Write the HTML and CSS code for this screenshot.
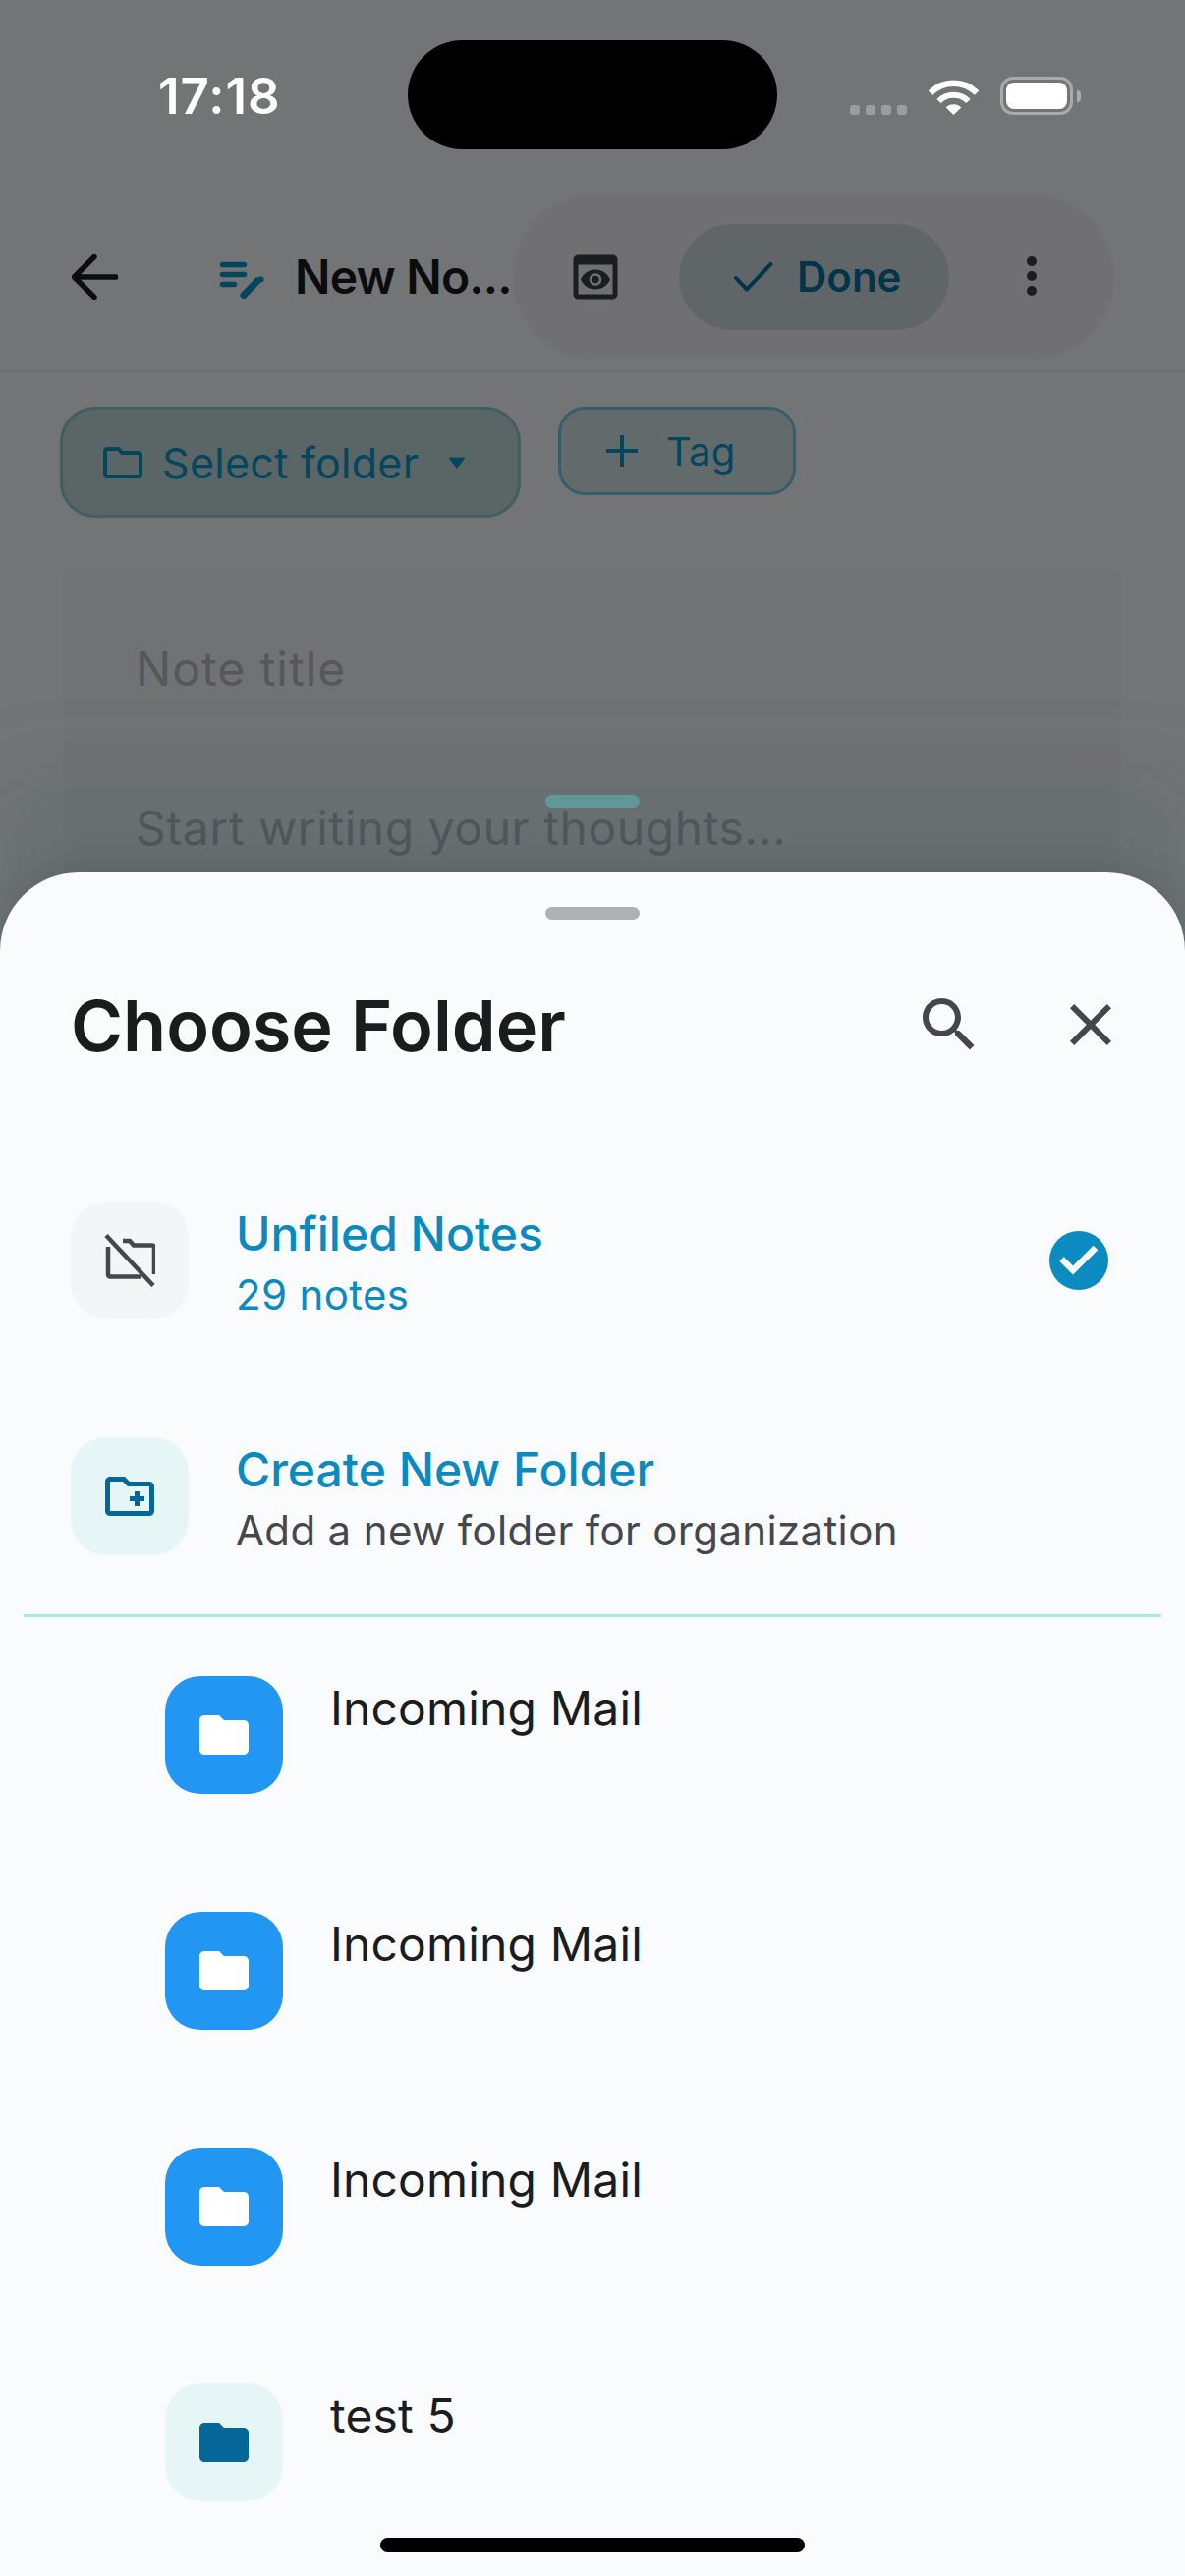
FILE: index.html
```html
<!doctype html>
<html lang="en">
  <head>
    <meta charset="utf-8">
    <title>Choose Folder</title>
    <link rel="stylesheet" href="styles.css">
  </head>

  <body>
    <div class="screen">
      <div class="status">
        <div class="time">17:18</div>
        <div class="island"></div>
        <div class="status-icons">
          <div class="signal"><i></i><i></i><i></i><i></i></div>
          <svg class="wifi" viewBox="0 0 51 37">
            <path d="M1.9 14.6A33 33 0 0 1 49.1 14.6" fill="none" stroke="#fff" stroke-width="6.5"/>
            <path d="M10.5 23A21 21 0 0 1 40.5 23" fill="none" stroke="#fff" stroke-width="6"/>
            <path d="M25.5 37L17.7 29.4A11 11 0 0 1 33.3 29.4Z" fill="#fff"/>
          </svg>
          <div class="battery"><span></span></div>
          <div class="battery-cap"></div>
        </div>
      </div>

      <!-- the note editor behind the sheet -->
      <div class="appbar">
        <svg class="back" viewBox="0 0 47 46">
          <path d="M45 23H3M23 2.500L2.500 23 23 43.500" fill="none" stroke="#1a1c20" stroke-width="5.500" stroke-linecap="round" stroke-linejoin="round"/>
        </svg>
        <svg class="edit-icon" viewBox="0 0 46 38">
          <path d="M3.500 3.500H25.500M3.500 13.500H25.500M3.500 23.500H15.500" fill="none" stroke="#0a98cc" stroke-width="5.500" stroke-linecap="round"/>
          <path d="M25 34.500L39 20" fill="none" stroke="#0a98cc" stroke-width="7" stroke-linecap="round"/>
          <circle cx="42.500" cy="18.500" r="3" fill="#0a98cc"/>
        </svg>
        <div class="note-name">New No...</div>
        <div class="actions">
          <svg class="preview" viewBox="0 0 24 24">
            <path d="M19 3H5c-1.110 0-2 .9-2 2v14c0 1.100.89 2 2 2h14c1.100 0 2-.9 2-2V5c0-1.100-.89-2-2-2zm0 16H5V7h14v12zm-5.500-6c0 .83-.67 1.500-1.500 1.500s-1.500-.67-1.500-1.500.67-1.500 1.500-1.500 1.500.67 1.500 1.500zM12 9c-2.730 0-5.060 1.660-6 4 .94 2.340 3.270 4 6 4s5.060-1.660 6-4c-.94-2.340-3.270-4-6-4zm0 6.500c-1.380 0-2.500-1.120-2.500-2.500s1.120-2.500 2.500-2.500 2.500 1.120 2.500 2.500-1.120 2.500-2.500 2.500z" fill="#3e4148"/>
          </svg>
          <div class="done">
            <svg class="done-check" viewBox="0 0 40 30">
              <path d="M2 16L13 27.500 37.500 2" fill="none" stroke="#0a72a0" stroke-width="4" stroke-linecap="round" stroke-linejoin="round"/>
            </svg>
            <span>Done</span>
          </div>
          <svg class="more" viewBox="0 0 12 44">
            <circle cx="6" cy="6" r="5" fill="#3e4148"/>
            <circle cx="6" cy="21" r="5" fill="#3e4148"/>
            <circle cx="6" cy="36" r="5" fill="#3e4148"/>
          </svg>
        </div>
      </div>

      <div class="chips">
        <div class="chip-folder">
          <svg class="chip-folder-icon" viewBox="0 0 24 24">
            <path d="M9.170 6l2 2H20v10H4V6h5.170M10 4H4c-1.100 0-1.990.9-1.990 2L2 18c0 1.100.9 2 2 2h16c1.100 0 2-.9 2-2V8c0-1.100-.9-2-2-2h-8l-2-2z" fill="#0a98cc"/>
          </svg>
          <span>Select folder</span>
          <svg class="caret" viewBox="0 0 18 12">
            <path d="M2 1.500H16L9 10.500Z" fill="#0a98cc" stroke="#0a98cc" stroke-width="2" stroke-linejoin="round"/>
          </svg>
        </div>
        <div class="chip-tag">
          <svg class="plus" viewBox="0 0 32 32">
            <path d="M16 0V32M0 16H32" stroke="#0a98cc" stroke-width="4"/>
          </svg>
          <span>Tag</span>
        </div>
      </div>

      <div class="note-card">
        <div class="note-title">Note title</div>
        <div class="note-body">Start writing your thoughts...</div>
      </div>

      <div class="scrim"></div>
      <div class="back-sheet"></div>
      <div class="back-handle"></div>

      <div class="sheet">
        <div class="handle"></div>
        <div class="sheet-head">
          <h1>Choose Folder</h1>
          <svg class="head-icon" viewBox="0 0 24 24">
            <path d="M15.500 14h-.79l-.28-.27C15.410 12.590 16 11.110 16 9.500 16 5.910 13.090 3 9.500 3S3 5.910 3 9.500 5.910 16 9.500 16c1.610 0 3.090-.59 4.230-1.570l.27.28v.79l5 4.990L20.490 19l-4.990-5zm-6 0C7.010 14 5 11.990 5 9.500S7.010 5 9.500 5 14 7.010 14 9.500 11.990 14 9.500 14z" fill="#43464c"/>
          </svg>
          <svg class="head-icon" viewBox="0 0 24 24">
            <path d="M19 6.410 17.590 5 12 10.590 6.410 5 5 6.410 10.590 12 5 17.590 6.410 19 12 13.410 17.590 19 19 17.590 13.410 12z" fill="#43464c"/>
          </svg>
        </div>

        <div class="choices">
          <div class="row row-top">
            <div class="tile tile-grey">
              <svg class="icon-off" viewBox="0 0 52 54">
                <path d="M2 1.500L50 52.500" fill="none" stroke="#45474d" stroke-width="4.500"/>
                <path d="M4 13V41.500A2 2 0 0 0 6 43.500H38" fill="none" stroke="#45474d" stroke-width="4.500"/>
                <path d="M19 7H26L30 11.500H49A2 2 0 0 1 51 13.500V41" fill="none" stroke="#45474d" stroke-width="4.500"/>
              </svg>
            </div>
            <div class="text">
              <div class="row-title accent">Unfiled Notes</div>
              <div class="row-sub accent">29 notes</div>
            </div>
            <svg class="selected" viewBox="0 0 60 60">
              <circle cx="30" cy="30" r="30" fill="#0b8bc0"/>
              <path d="M12.500 28.500L24 40 47 17" fill="none" stroke="#fff" stroke-width="6.500"/>
            </svg>
          </div>

          <div class="row row-top">
            <div class="tile tile-teal">
              <svg class="icon-60" viewBox="0 0 24 24">
                <path d="M20 6h-8l-2-2H4c-1.110 0-1.990.89-1.990 2L2 18c0 1.110.89 2 2 2h16c1.110 0 2-.89 2-2V8c0-1.110-.89-2-2-2zm0 12H4V6h5.170l2 2H20v10zm-8-4h2v2h2v-2h2v-2h-2v-2h-2v2h-2z" fill="#056797"/>
              </svg>
            </div>
            <div class="text">
              <div class="row-title accent">Create New Folder</div>
              <div class="row-sub">Add a new folder for organization</div>
            </div>
          </div>
        </div>

        <div class="sheet-rule"></div>

        <div class="folders">
          <div class="row row-folder">
            <div class="tile tile-blue">
              <svg class="icon-60" viewBox="0 0 24 24">
                <path d="M10 4H4c-1.100 0-1.990.9-1.990 2L2 18c0 1.100.9 2 2 2h16c1.100 0 2-.9 2-2V8c0-1.100-.9-2-2-2h-8l-2-2z" fill="#fff"/>
              </svg>
            </div>
            <div class="row-title">Incoming Mail</div>
          </div>
          <div class="row row-folder">
            <div class="tile tile-blue">
              <svg class="icon-60" viewBox="0 0 24 24">
                <path d="M10 4H4c-1.100 0-1.990.9-1.990 2L2 18c0 1.100.9 2 2 2h16c1.100 0 2-.9 2-2V8c0-1.100-.9-2-2-2h-8l-2-2z" fill="#fff"/>
              </svg>
            </div>
            <div class="row-title">Incoming Mail</div>
          </div>
          <div class="row row-folder">
            <div class="tile tile-blue">
              <svg class="icon-60" viewBox="0 0 24 24">
                <path d="M10 4H4c-1.100 0-1.990.9-1.990 2L2 18c0 1.100.9 2 2 2h16c1.100 0 2-.9 2-2V8c0-1.100-.9-2-2-2h-8l-2-2z" fill="#fff"/>
              </svg>
            </div>
            <div class="row-title">Incoming Mail</div>
          </div>
          <div class="row row-folder">
            <div class="tile tile-teal">
              <svg class="icon-60" viewBox="0 0 24 24">
                <path d="M10 4H4c-1.100 0-1.990.9-1.990 2L2 18c0 1.100.9 2 2 2h16c1.100 0 2-.9 2-2V8c0-1.100-.9-2-2-2h-8l-2-2z" fill="#056797"/>
              </svg>
            </div>
            <div class="row-title">test 5</div>
          </div>
        </div>
      </div>

      <div class="home-bar"></div>
    </div>
  </body>
</html>
```

FILE: styles.css
```css
body {
    margin: 0;
    font-family: Inter, "Noto Sans", sans-serif;
}

svg {
    display: block;
    flex: none;
}

.screen {
    position: relative;
    width: 1206px;
    height: 2622px;
    overflow: hidden;
    background: #fafcfe;
}

/* status bar sits above the scrim */
.status {
    position: relative;
    z-index: 3;
    display: grid;
    grid-template-columns: 415px 376px 1fr;
    height: 198px;
}

.time {
    margin-top: 68px;
    padding-left: 161px;
    font-size: 51px;
    font-weight: 600;
    letter-spacing: 1px;
    line-height: 60px;
    color: #fff;
}

.island {
    margin-top: 41px;
    height: 111px;
    border-radius: 56px;
    background: #000;
}

.status-icons {
    display: flex;
    align-items: flex-end;
    height: 117px;
    padding-left: 74px;
}

.signal {
    display: flex;
    gap: 6px;
}

.signal i {
    width: 10px;
    height: 10px;
    border-radius: 3px;
    background: #9b9c9d;
}

.wifi {
    width: 51px;
    height: 37px;
    margin-left: 22px;
}

.battery {
    box-sizing: border-box;
    width: 74px;
    height: 39px;
    margin-left: 22px;
    padding: 3px;
    border: 3px solid #a9aaab;
    border-radius: 13px;
}

.battery span {
    display: block;
    height: 100%;
    border-radius: 8px;
    background: #fff;
}

.battery-cap {
    width: 4px;
    height: 12px;
    margin: 0 0 13px 4px;
    border-radius: 0 4px 4px 0;
    background: #a9aaab;
}

.appbar {
    display: flex;
    align-items: center;
    height: 167px;
    padding: 0 0 12px 73px;
    border-bottom: 2px solid #e0f4f2;
}

.back {
    width: 47px;
    height: 46px;
}

.edit-icon {
    width: 46px;
    height: 38px;
    margin-left: 103px;
    margin-top: 6px;
}

.note-name {
    width: 222px;
    margin-left: 31px;
    font-size: 48px;
    font-weight: 600;
    letter-spacing: -0.8px;
    color: #1a1c20;
    white-space: nowrap;
}

.actions {
    display: flex;
    align-items: center;
    width: 612px;
    height: 167px;
    padding-left: 54px;
    box-sizing: border-box;
    border-radius: 84px;
    background: #f4f5f8;
}

.preview {
    width: 60px;
    height: 60px;
}

.done {
    display: flex;
    align-items: center;
    gap: 24px;
    box-sizing: border-box;
    width: 275px;
    height: 108px;
    margin-left: 55px;
    padding-left: 56px;
    border-radius: 54px;
    background: #d2dfe3;
    font-size: 42px;
    font-weight: 600;
    color: #0a72a0;
}

.done-check {
    width: 40px;
    height: 30px;
}

.more {
    width: 12px;
    height: 44px;
    margin-left: 78px;
}

.chips {
    display: flex;
    align-items: flex-start;
    gap: 38px;
    padding: 35px 0 0 61px;
}

.chip-folder {
    display: flex;
    align-items: center;
    box-sizing: border-box;
    width: 469px;
    height: 113px;
    padding-left: 37px;
    border: 3px solid #90ccd8;
    border-radius: 36px;
    background: #c4dcdc;
    font-size: 43px;
    letter-spacing: 0.3px;
    color: #0a98cc;
}

.chip-folder-icon {
    width: 48px;
    height: 48px;
    margin-right: 16px;
}

.caret {
    width: 18px;
    height: 12px;
    margin-left: 30px;
}

.chip-tag {
    display: flex;
    align-items: center;
    box-sizing: border-box;
    width: 242px;
    height: 90px;
    padding-left: 46px;
    border: 3px solid #78c8e8;
    border-radius: 27px;
    background: #d8e6ea;
    font-size: 40px;
    letter-spacing: 0.2px;
    color: #0a98cc;
}

.plus {
    width: 32px;
    height: 32px;
    margin-right: 29px;
}

.note-card {
    height: 420px;
    margin: 55px 65px 0 64px;
    padding: 70px 0 0 74px;
    background: #f6f8fa;
    font-size: 48px;
    line-height: 58px;
    color: #b9bdc4;
}

.note-title {
    letter-spacing: 1px;
}

.note-body {
    margin-top: 104px;
    letter-spacing: 0.55px;
}

.scrim {
    position: absolute;
    inset: 0;
    z-index: 1;
    background: rgba(0, 0, 0, 0.54);
}

.back-sheet {
    position: absolute;
    top: 790px;
    left: 0;
    right: 0;
    height: 300px;
    z-index: 1;
    background: rgba(20, 90, 95, 0.1);
    filter: blur(40px);
}

.back-handle {
    position: absolute;
    top: 809px;
    left: 555px;
    z-index: 2;
    width: 96px;
    height: 13px;
    border-radius: 7px;
    background: #609797;
}

.sheet {
    position: absolute;
    top: 888px;
    left: 0;
    right: 0;
    bottom: 0;
    z-index: 2;
    border-radius: 80px 80px 0 0;
    background: #f9fbfd;
    box-shadow: 0 -4px 40px rgba(0, 0, 0, 0.12);
}

.handle {
    width: 96px;
    height: 13px;
    margin: 35px auto 0;
    border-radius: 7px;
    background: #aeb0b4;
}

.sheet-head {
    display: flex;
    align-items: center;
    gap: 72px;
    height: 72px;
    margin-top: 71px;
    padding: 0 60px 0 72px;
}

.sheet-head h1 {
    flex: 1;
    margin: 0;
    font-size: 72px;
    font-weight: 600;
    color: #1a1c1e;
}

.head-icon {
    width: 72px;
    height: 72px;
}

.choices {
    padding-top: 84px;
}

.row {
    display: flex;
    align-items: flex-start;
    box-sizing: border-box;
    height: 240px;
    padding-top: 60px;
}

.row-top {
    padding-left: 72px;
}

.row-folder {
    padding-left: 168px;
}

.tile {
    display: flex;
    align-items: center;
    justify-content: center;
    flex: none;
    width: 120px;
    height: 120px;
    border-radius: 36px;
}

.tile-grey {
    background: #f4f5f7;
}

.tile-teal {
    background: #e6f6f6;
}

.tile-blue {
    background: #2196f3;
}

.icon-off {
    width: 52px;
    height: 54px;
}

.icon-60 {
    width: 60px;
    height: 60px;
}

.text {
    padding-left: 48px;
}

.row-title {
    padding-top: 4px;
    font-size: 48px;
    letter-spacing: 0.15px;
    line-height: 58px;
    color: #1b1c1e;
}

.row-top .row-title {
    font-weight: 450;
    letter-spacing: 0;
}

.row-folder .row-title {
    padding-left: 48px;
}

.row-sub {
    margin-top: 8px;
    font-size: 42px;
    letter-spacing: 0.35px;
    line-height: 50px;
    color: #45474d;
}

.accent {
    color: #0a8abf;
}

.selected {
    width: 60px;
    height: 60px;
    margin: 30px 78px 0 auto;
}

.sheet-rule {
    height: 3px;
    margin: 0 24px;
    background: #ade9e3;
}

.home-bar {
    position: absolute;
    left: 387px;
    bottom: 24px;
    z-index: 3;
    width: 432px;
    height: 15px;
    border-radius: 8px;
    background: #000;
}
```
